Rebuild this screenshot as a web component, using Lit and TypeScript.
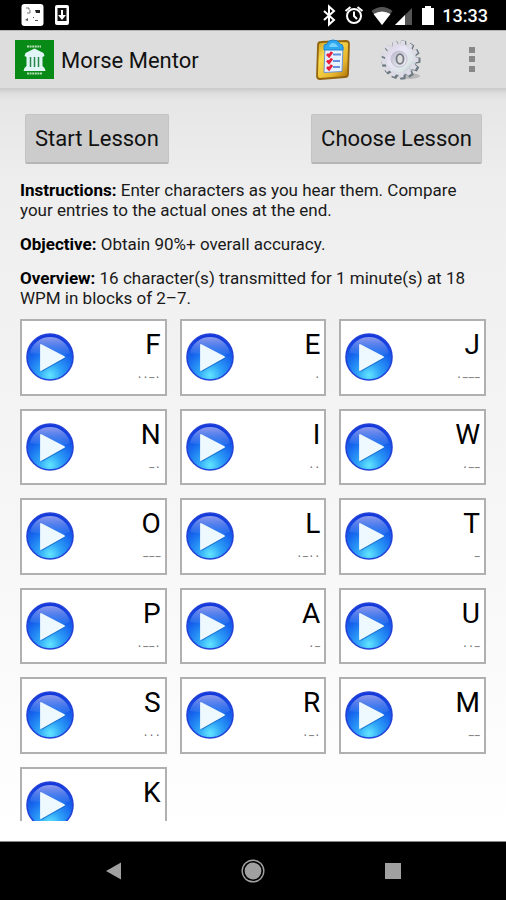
import { LitElement, html, css, svg } from "lit";
import { customElement, property } from "lit/decorators.js";

const LESSON: [string, string][] = [
  ["F", "··−·"], ["E", "·"], ["J", "·−−−"],
  ["N", "−·"], ["I", "··"], ["W", "·−−"],
  ["O", "−−−"], ["L", "·−··"], ["T", "−"],
  ["P", "·−−·"], ["A", "·−"], ["U", "··−"],
  ["S", "···"], ["R", "·−·"], ["M", "−−"],
  ["K", "−·−"],
];

const gearTeeth = Array.from({ length: 13 }, (_, i) => i * (360 / 13) + 8);

@customElement("status-bar")
class StatusBar extends LitElement {
  static styles = css`
    :host {
      display: flex;
      align-items: center;
      justify-content: space-between;
      height: 30px;
      flex: none;
      padding: 0 18px 0 21px;
      background: #000;
      color: #fff;
      box-sizing: border-box;
    }
    .group { display: flex; align-items: center; }
    .time { font-size: 18px; line-height: 24px; font-weight: 500; margin-left: 7px; padding-top: 2px; }
    svg { display: block; }
  `;
  render() {
    return html`
      <div class="group">
        <svg width="50" height="24" viewBox="0 0 50 24" aria-hidden="true">
          <rect x="0.5" y="1" width="22" height="22" rx="3" fill="#fff" />
          <path d="M5 5h3v2M9 7v3H6" fill="none" stroke="#777" />
          <path d="M14 7h5v3h-4z" fill="#222" />
          <path d="M4 17l3-2v3zM12 14h1v1h-1zM14 17h3v1h-3z" fill="#555" />
          <rect x="34" y="2" width="14" height="20" rx="2" fill="#fff" />
          <rect x="36.500" y="5" width="9" height="13" fill="#111" />
          <path d="M40 7h2v5h3l-4 5-4-5h3z" fill="#fff" />
        </svg>
      </div>
      <div class="group">
        <svg width="112" height="24" viewBox="0 0 112 24" aria-hidden="true">
          <path d="M1 8l10 9-5 4.500V3.500L11 8 1 17" fill="none" stroke="#fff" stroke-width="2" />
          <g fill="none" stroke="#fff" stroke-width="2">
            <circle cx="31" cy="13" r="7" />
            <path d="M31 8.500V13l3 3" />
            <path d="M22.500 8l5-4M39.500 8l-5-4" />
          </g>
          <path d="M59 22L48.500 8Q59 0 69.500 8z" fill="#555" />
          <path d="M59 22L50.500 11Q59 6 67.500 11z" fill="#fff" />
          <path d="M89 5v17H72z" fill="#555" />
          <path d="M82 12v10H72z" fill="#fff" />
          <path d="M99 5h3V3h6v2h3v17H99z" fill="#fff" />
        </svg>
        <span class="time">13:33</span>
      </div>
    `;
  }
}

@customElement("action-bar")
class ActionBar extends LitElement {
  static styles = css`
    :host {
      display: flex;
      align-items: center;
      flex: none;
      height: 58px;
      padding: 0 18px 0 15px;
      box-sizing: border-box;
      background: #dddddd;
      border-top: 1px solid #b4b4b4;
    }
    h1 { flex: 1; margin: 0; padding: 2px 0 0 7px; font-size: 22px; line-height: 30px; font-weight: 400; color: #111; }
    button { border: 0; padding: 0; background: none; display: block; }
    svg { display: block; }
    .gear { margin-left: 29px; }
    .more { margin-left: 36px; padding: 0 12px; }
  `;
  render() {
    return html`
      <svg width="39" height="39" viewBox="0 0 39 39" role="img" aria-label="Morse Mentor logo">
        <rect width="39" height="39" fill="#078a16" />
        <path d="M12 6.500h14M12 33.500h15" stroke="#b8dcb8" stroke-width="2" stroke-dasharray="2 .6" />
        <path d="M19.500 8.500l9 4.500 1 3-2 1v9l2 2 1 3H8.500l1-3 2-2v-9l-2-1 1-3z" fill="#e2f5f6" />
        <path d="M15.500 17v10M19.500 17v10M23.500 17v10" stroke="#28874a" stroke-width="1.500" />
      </svg>
      <h1>Morse Mentor</h1>
      <button aria-label="Results">
        <svg width="36" height="42" viewBox="0 0 36 42">
          <defs>
            <linearGradient id="gold" x1="0" x2="1" y1="0" y2="1">
              <stop offset="0" stop-color="#c99b20" /><stop offset=".3" stop-color="#f8dc50" />
              <stop offset=".7" stop-color="#e6b52c" /><stop offset="1" stop-color="#a86a08" />
            </linearGradient>
          </defs>
          <path d="M6 3L31 2Q34 2 34 5L33 35Q33 38 30 38L5 40Q2 40 2 37L3 6Q3 3 6 3z" fill="url(#gold)" stroke="#94650f" stroke-width="1.800" />
          <path d="M10 8h18l-1 24.500-18 1z" fill="#e8f2ff" stroke="#6c93d0" />
          <path d="M9 11V7q0-2 3-2 1-4 6-4t7 4q3 0 3 3v3z" fill="#30a8f0" stroke="#1d83cf" />
          <path d="M14 8q1-4 4-4t5 4z" fill="#75d2ff" />
          <path d="M18 15.500h8M18 22h7M18 28h7" stroke="#6390dc" stroke-width="2" />
          <path d="M12 15l2 2 3-4M12 21.500l2 2 3-4M12 28l2 2 3-4" fill="none" stroke="#e61e3c" stroke-width="2.800" />
        </svg>
      </button>
      <button class="gear" aria-label="Settings">
        <svg width="41" height="42" viewBox="0 0 41 42">
          <defs>
            <linearGradient id="steel" x1="0" x2="1" y1="0" y2="1">
              <stop offset="0" stop-color="#cfcbdc" /><stop offset=".35" stop-color="#e9e5f6" />
              <stop offset=".7" stop-color="#dce6e8" /><stop offset="1" stop-color="#93a0a5" />
            </linearGradient>
            <linearGradient id="hub" x1="0" x2="1" y1="0" y2="1">
              <stop offset="0" stop-color="#b9b7c9" /><stop offset="1" stop-color="#f4f5fa" />
            </linearGradient>
          </defs>
          <ellipse cx="29" cy="37" rx="11" ry="3" fill="#b9b9b9" />
          <g fill="#6e7a82">
            ${gearTeeth.map((a) => svg`<path d="M17.500 7l1-5.500h5l1 5.500z" transform="rotate(${a} 21 21)" />`)}
            <circle cx="21" cy="21" r="15.500" />
          </g>
          <g fill="url(#steel)">
            <circle cx="20.500" cy="20.500" r="15.500" />
            ${gearTeeth.map((a) => svg`<path d="M17.500 7l1-5.500h4l1 5.500z" fill="#dcdbe6" transform="rotate(${a} 20 20)" />`)}
          </g>
          <circle cx="19" cy="20" r="8" fill="url(#hub)" stroke="#c4c2d3" />
          <ellipse cx="20" cy="20" rx="3.500" ry="4.800" fill="#dedede" stroke="#737a83" stroke-width="1.800" />
        </svg>
      </button>
      <button class="more" aria-label="More options">
        <svg width="7" height="26" viewBox="0 0 7 26" fill="#888">
          <path d="M0 0h6v6H0zM0 9h6v6H0zM0 19h6v6H0z" />
        </svg>
      </button>
    `;
  }
}

@customElement("character-card")
class CharacterCard extends LitElement {
  @property() char = "";
  @property() code = "";
  static styles = css`
    :host {
      display: flex;
      align-items: center;
      justify-content: space-between;
      aspect-ratio: 23 / 12;
      box-sizing: border-box;
      border: 2px solid #b0b0b0;
      background: #fff;
      padding: 0 4px;
    }
    button { border: 0; padding: 0; background: none; display: block; }
    svg { display: block; }
    .label { display: flex; flex-direction: column; align-items: flex-end; gap: 10px; padding-bottom: 2px; color: #000; }
    .char { font-size: 28px; line-height: 34px; }
    .code { font: 10px/12px "DejaVu Sans Mono", monospace; color: #707070; }
  `;
  render() {
    return html`
      <button aria-label="Play ${this.char}">
        <svg width="48" height="48" viewBox="0 0 48 48">
          <defs>
            <radialGradient id="ball" cx=".5" cy=".9" r=".85">
              <stop offset="0" stop-color="#62e6ff" /><stop offset=".3" stop-color="#2ea2f8" />
              <stop offset=".65" stop-color="#1668ee" /><stop offset="1" stop-color="#1238dc" />
            </radialGradient>
            <linearGradient id="gloss" x1="0" x2="0" y1="0" y2="1">
              <stop offset="0" stop-color="#909cec" /><stop offset="1" stop-color="#5c98f6" stop-opacity=".1" />
            </linearGradient>
          </defs>
          <circle cx="24" cy="24" r="23" fill="url(#ball)" stroke="#2343d8" stroke-width="1.600" />
          <path d="M4 20A20.500 20.500 0 0 1 44 20Q34 25 24 23T4 20z" fill="url(#gloss)" />
          <path d="M15.500 13.500L39 25.500 15.500 39z" fill="#0c55b8" opacity=".6" />
          <path d="M15 12L38 24 15 37z" fill="#eef9ff" stroke="#eef9ff" stroke-width="1.800" stroke-linejoin="round" />
        </svg>
      </button>
      <div class="label">
        <span class="char">${this.char}</span>
        <span class="code">${this.code}</span>
      </div>
    `;
  }
}

@customElement("nav-bar")
class NavBar extends LitElement {
  static styles = css`
    :host {
      display: flex;
      align-items: center;
      justify-content: center;
      gap: 23%;
      flex: none;
      height: 59px;
      background: #000;
      border-top: 1px solid #888;
      box-sizing: border-box;
    }
    button { border: 0; padding: 0; background: none; display: block; }
    svg { display: block; }
  `;
  render() {
    return html`
      <button aria-label="Back">
        <svg width="24" height="24" viewBox="0 0 24 24"><path d="M5 12L20 3.500v17z" fill="#a0a0a0" /></svg>
      </button>
      <button aria-label="Home">
        <svg width="24" height="24" viewBox="0 0 24 24">
          <circle cx="12" cy="12" r="10.800" fill="none" stroke="#a0a0a0" stroke-width="1.400" />
          <circle cx="12" cy="12" r="8.400" fill="#a0a0a0" />
        </svg>
      </button>
      <button aria-label="Recent apps">
        <svg width="24" height="24" viewBox="0 0 24 24"><path d="M4 4h16v16H4z" fill="#a0a0a0" /></svg>
      </button>
    `;
  }
}

@customElement("app-root")
class AppRoot extends LitElement {
  static styles = css`
    :host {
      display: flex;
      flex-direction: column;
      height: 100vh;
      background: #fff;
      font-family: Roboto, "Liberation Sans", sans-serif;
      color: #1a1a1a;
    }
    main {
      flex: 1;
      min-height: 0;
      display: flex;
      flex-direction: column;
      padding: 26px 20px 20px;
      background: linear-gradient(#c8c8c8, #dedede 5px, #e6e6e6 12px, #eeeeee 100px, #f5f5f5 50%, #ffffff);
    }
    .scroll { flex: 1; min-height: 0; overflow-y: auto; scrollbar-width: none; }
    .actions { display: flex; justify-content: space-between; padding: 0 4px 0 5px; }
    .actions button {
      height: 50px;
      padding: 0 9px;
      border: 1px solid #c4c4c4;
      border-bottom: 2px solid #b5b5b5;
      border-radius: 2px;
      background: #cccccc;
      color: #111;
      font: 22px/26px Roboto, "Liberation Sans", sans-serif;
    }
    .notes { padding: 16px 0 11px; display: grid; gap: 14px; }
    p { margin: 0; font-size: 17px; line-height: 20px; }
    b { color: #000; }
    .grid { display: grid; grid-template-columns: repeat(3, 1fr); gap: 13px; }
  `;
  render() {
    return html`
      <status-bar></status-bar>
      <action-bar></action-bar>
      <main>
        <div class="scroll">
          <div class="actions">
            <button>Start Lesson</button>
            <button>Choose Lesson</button>
          </div>
          <div class="notes">
            <p><b>Instructions:</b> Enter characters as you hear them. Compare your entries to the actual ones at the end.</p>
            <p><b>Objective:</b> Obtain 90%+ overall accuracy.</p>
            <p><b>Overview:</b> 16 character(s) transmitted for 1 minute(s) at 18 WPM in blocks of 2–7.</p>
          </div>
          <div class="grid">
            ${LESSON.map(([c, m]) => html`<character-card .char=${c} .code=${m}></character-card>`)}
          </div>
        </div>
      </main>
      <nav-bar></nav-bar>
    `;
  }
}
